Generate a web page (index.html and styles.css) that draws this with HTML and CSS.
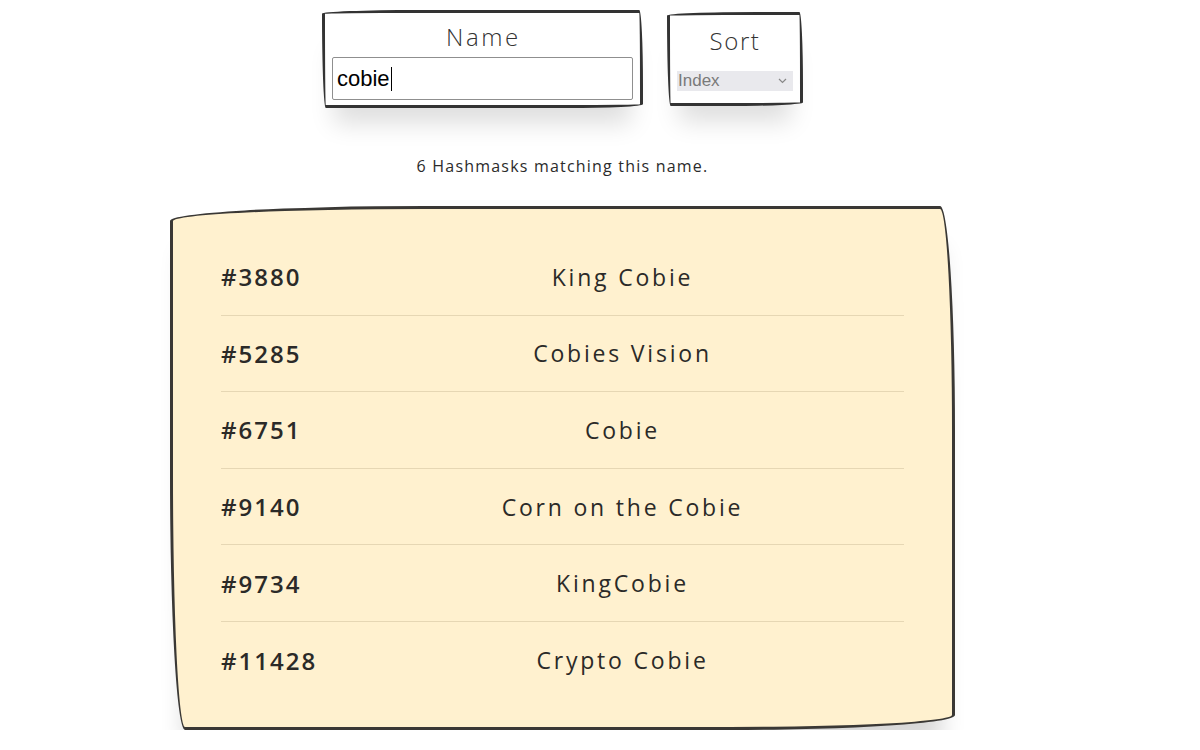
FILE: index.html
```html
<!DOCTYPE html>
<html>
<head>
<meta charset="utf-8">
<link rel="stylesheet" href="styles.css">
</head>
<body>
<div class="page">
  <div class="controls">
    <div class="box name-box">
      <div class="label">Name</div>
      <div class="input">cobie<span class="caret"></span></div>
    </div>
    <div class="box sort-box">
      <div class="label">Sort</div>
      <div class="select"><span>Index</span><svg width="9" height="6" viewBox="0 0 9 6"><path d="M1 1 L4.5 4.5 L8 1" fill="none" stroke="#888" stroke-width="1.2"/></svg></div>
    </div>
  </div>
  <p class="count">6 Hashmasks matching this name.</p>
  <div class="card">
    <div class="row"><span class="id">#3880</span><span class="nm">King Cobie</span></div>
    <div class="row"><span class="id">#5285</span><span class="nm">Cobies Vision</span></div>
    <div class="row"><span class="id">#6751</span><span class="nm">Cobie</span></div>
    <div class="row"><span class="id">#9140</span><span class="nm">Corn on the Cobie</span></div>
    <div class="row"><span class="id">#9734</span><span class="nm">KingCobie</span></div>
    <div class="row last"><span class="id">#11428</span><span class="nm">Crypto Cobie</span></div>
  </div>
</div>
</body>
</html>
```

FILE: styles.css
```css
html, body {
  margin: 0;
  padding: 0;
  background: #fff;
  overflow: hidden;
}
body {
  font-family: "Open Sans", "Noto Sans", sans-serif;
  color: #2b2b2b;
}
.page {
  width: 1125px;
  display: flex;
  flex-direction: column;
  align-items: center;
}
.controls {
  display: flex;
  align-items: flex-start;
  gap: 24px;
  padding-top: 10px;
}
.box {
  background: #fff;
  border: 3px solid #333;
  box-sizing: border-box;
  box-shadow: 0 28px 24px -12px rgba(0, 0, 0, 0.13);
  border-radius: 150px 6px 120px 6px / 6px 120px 6px 150px;
  display: flex;
  flex-direction: column;
  align-items: center;
}
.name-box {
  width: 321px;
  height: 98px;
  padding: 10px 7px 0;
}
.sort-box {
  width: 136px;
  height: 94px;
  margin-top: 2px;
  padding: 12px 7px 0;
}
.label {
  font-size: 24px;
  letter-spacing: 2.6px;
  line-height: 28px;
  color: #333;
  font-weight: 300;
}
.name-box .label {
  margin-bottom: 6px;
  padding-left: 2px;
}
.input {
  align-self: stretch;
  height: 43px;
  border: 1px solid #8f8f8f;
  border-radius: 2px;
  box-sizing: border-box;
  font-family: "Liberation Sans", Arial, sans-serif;
  font-size: 22px;
  color: #000;
  padding: 0 4px;
  display: flex;
  align-items: center;
}
.caret {
  display: inline-block;
  width: 1px;
  height: 24px;
  background: #000;
  margin-left: 1px;
}
.sort-box .label {
  margin-bottom: 16px;
  letter-spacing: 1.6px;
}
.select {
  align-self: stretch;
  height: 20px;
  background: #e9e9ed;
  display: flex;
  align-items: center;
  justify-content: space-between;
  padding: 0 6px 0 1px;
  font-family: "Liberation Sans", Arial, sans-serif;
  font-size: 17px;
  color: #7a7a7a;
}
.count {
  margin: 48px 0 0;
  font-size: 16px;
  line-height: 20px;
  color: #2b2b2b;
  letter-spacing: 1.2px;
}
.card {
  margin-top: 30px;
  width: 785px;
  height: 524px;
  box-sizing: border-box;
  background: #fff1cf;
  border: 3px solid #3a3835;
  border-radius: 255px 15px 225px 15px / 15px 225px 15px 255px;
  box-shadow: 0 30px 24px -14px rgba(0, 0, 0, 0.16);
  padding: 30px 48px 0 48px;
}
.row {
  display: flex;
  align-items: center;
  height: 76.6px;
  box-sizing: border-box;
  border-bottom: 1px solid #e6d7b4;
}
.row.last {
  border-bottom: none;
}
.id {
  width: 120px;
  font-size: 24px;
  font-weight: 600;
  letter-spacing: 2px;
  color: #2b2a28;
}
.nm {
  flex: 1;
  text-align: center;
  font-size: 23px;
  letter-spacing: 2.8px;
  color: #2b2a28;
}
```
